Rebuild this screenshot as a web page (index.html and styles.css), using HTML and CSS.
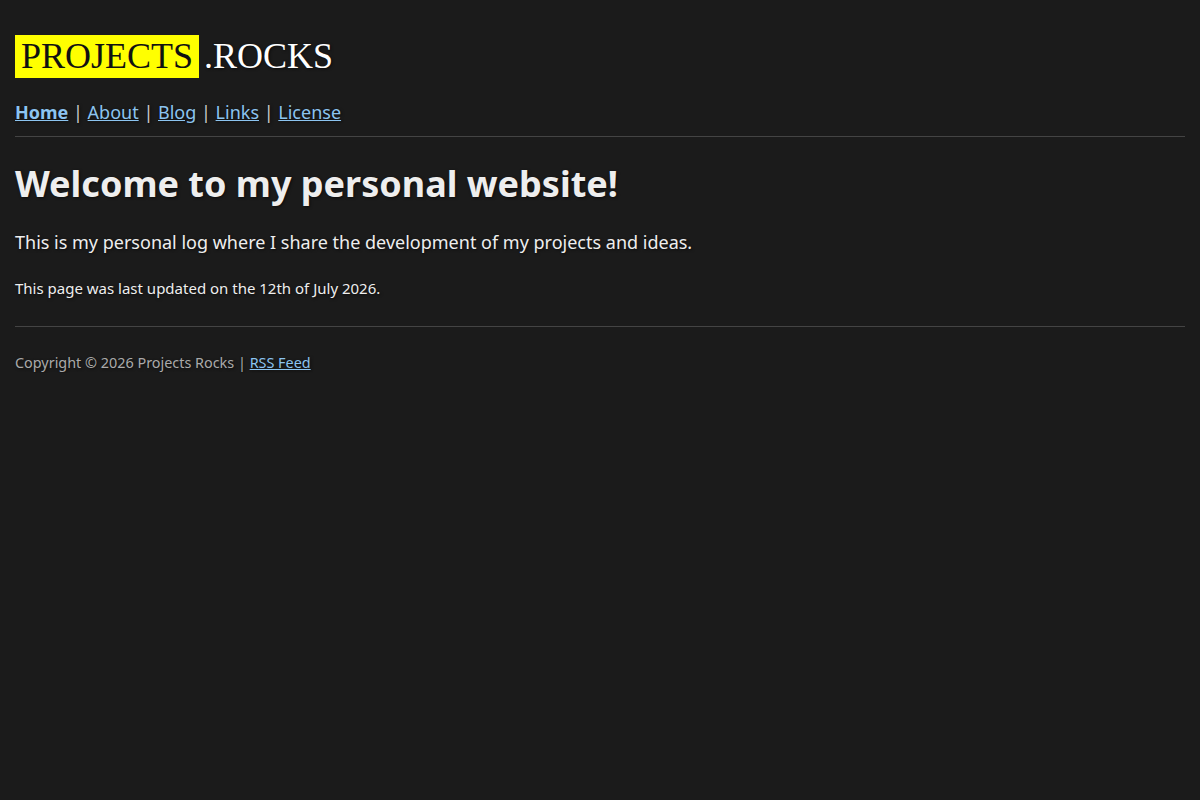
FILE: index.html
```html
<!DOCTYPE html>
<html lang="en">
<head>
    <meta charset="UTF-8">
    <meta name="viewport" content="width=device-width, initial-scale=1.0">
    <title>Projects Rocks</title>
    <link rel="stylesheet" href="styles.css">
</head>
<body>
    <header>
        <div class="logo"><span class="logo-mark">PROJECTS</span><span class="logo-rest">.ROCKS</span></div>
        <nav>
            <a href="#" class="active">Home</a> |
            <a href="#">About</a> |
            <a href="#">Blog</a> |
            <a href="#">Links</a> |
            <a href="#">License</a>
        </nav>
    </header>
    <hr>
    <main>
        <h1>Welcome to my personal website!</h1>
        <p class="intro">This is my personal log where I share the development of my projects and ideas.</p>
        <p class="updated">This page was last updated on the 12th of July 2026.</p>
    </main>
    <hr>
    <footer>
        Copyright &copy; 2026 Projects Rocks | <a href="#">RSS Feed</a>
    </footer>
</body>
</html>
```

FILE: styles.css
```css
body {
    margin: 0;
    padding: 0 15px;
    background-color: #1b1b1b;
    color: #eeeeee;
    font-family: "Noto Sans", sans-serif;
    text-shadow: 1px 1px 3px rgba(0, 0, 0, 0.6);
}
a {
    color: #8cc4f0;
}
header {
    padding-top: 35px;
}
.logo {
    font-family: "Liberation Serif", serif;
    font-size: 36px;
    line-height: 43px;
    color: #ffffff;
}
.logo-mark {
    display: inline-block;
    background-color: #ffff00;
    color: #111111;
    padding: 0 6px;
    text-shadow: none;
}
.logo-rest {
    margin-left: 5px;
}
nav {
    margin-top: 22px;
    font-size: 18px;
    line-height: 25px;
    color: #cccccc;
}
nav a.active {
    font-weight: bold;
}
hr {
    border: none;
    border-top: 1px solid #444444;
    margin: 11px 0 0;
}
h1 {
    font-size: 36px;
    margin: 23px 0 0;
    line-height: 48px;
}
.intro {
    font-size: 18px;
    margin: 22px 0 0;
    line-height: 25px;
}
.updated {
    font-size: 15px;
    margin: 23px 0 0;
    line-height: 20px;
}
main + hr {
    margin-top: 28px;
}
footer {
    font-size: 14.4px;
    color: #aaaaaa;
    padding-top: 26px;
    line-height: 20px;
}
```
